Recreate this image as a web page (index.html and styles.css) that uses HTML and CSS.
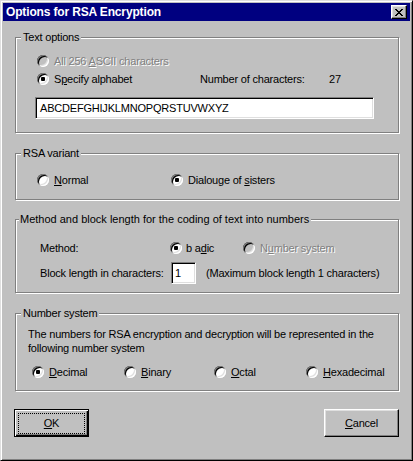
FILE: index.html
```html
<!DOCTYPE html>
<html>
<head>
<meta charset="utf-8">
<title>Options for RSA Encryption</title>
<link rel="stylesheet" href="styles.css">
</head>
<body>
<div class="window">
  <div class="titlebar">
    <span class="title">Options for RSA Encryption</span>
    <span class="close"><svg width="8" height="7" viewBox="0 0 8 7" shape-rendering="crispEdges"><path d="M0 0h2l2 2.5 2-2.5h2l-3 3.5 3 3.5h-2l-2-2.5-2 2.5h-2l3-3.5z" fill="#000"/></svg></span>
  </div>
  <div class="content">
    <div class="group g1">
      <div class="legend">Text options</div>
      <div class="row r1">
        <span class="opt disabled"><span class="radio off"></span><span>All 256 <u>A</u>SCII characters</span></span>
      </div>
      <div class="row r2">
        <span class="opt w-spec"><span class="radio checked"></span><span>S<u>p</u>ecify alphabet</span></span>
        <span class="w-num">Number of characters:</span>
        <span>27</span>
      </div>
      <div class="field alpha">ABCDEFGHIJKLMNOPQRSTUVWXYZ</div>
    </div>

    <div class="group g2">
      <div class="legend">RSA variant</div>
      <div class="row">
        <span class="opt w-normal"><span class="radio"></span><span><u>N</u>ormal</span></span>
        <span class="opt"><span class="radio checked"></span><span>Dialouge of <u>s</u>isters</span></span>
      </div>
    </div>

    <div class="group g3">
      <div class="legend legend-tight">Method and block length for the coding of text into numbers</div>
      <div class="row m1">
        <span class="w-method">Method:</span>
        <span class="opt w-badic"><span class="radio checked"></span><span>b a<u>d</u>ic</span></span>
        <span class="opt disabled"><span class="radio off"></span><span>N<u>u</u>mber system</span></span>
      </div>
      <div class="row m2">
        <span class="w-block">Block length in characters:</span>
        <span class="field blen">1</span>
        <span class="maxlen">(Maximum block length 1 characters)</span>
      </div>
    </div>

    <div class="group g4">
      <div class="legend">Number system</div>
      <p class="desc">The numbers for RSA encryption and decryption will be represented in the<br>following number system</p>
      <div class="row ns">
        <span class="opt w-dec"><span class="radio checked"></span><span><u>D</u>ecimal</span></span>
        <span class="opt w-bin"><span class="radio"></span><span><u>B</u>inary</span></span>
        <span class="opt w-oct"><span class="radio"></span><span><u>O</u>ctal</span></span>
        <span class="opt"><span class="radio"></span><span><u>H</u>exadecimal</span></span>
      </div>
    </div>

    <div class="buttons">
      <div class="btn default"><span class="focus"><u>O</u>K</span></div>
      <div class="btn"><span class="label"><u>C</u>ancel</span></div>
    </div>
  </div>
</div>
</body>
</html>
```

FILE: styles.css
```css
html, body {
  margin: 0;
  padding: 0;
}

body {
  background: #c0c0c0;
  font-family: "Liberation Sans", Arial, sans-serif;
  font-size: 11px;
  letter-spacing: -0.2px;
  color: #000;
}

u {
  text-decoration: underline;
  text-underline-offset: 1px;
  text-decoration-thickness: 1px;
}

.window {
  width: 413px;
  height: 461px;
  box-sizing: border-box;
  border: 1px solid;
  border-color: #dfdfdf #000 #000 #dfdfdf;
  box-shadow: inset 1px 1px #fff, inset -1px -1px #808080;
  padding: 2px;
  background: #c0c0c0;
  display: flex;
  flex-direction: column;
}

.titlebar {
  height: 18px;
  flex-shrink: 0;
  background: #000080;
  color: #fff;
  display: flex;
  align-items: center;
  justify-content: space-between;
  padding: 0 3px 0 3px;
}

.title {
  font-weight: bold;
  font-size: 12px;
  letter-spacing: -0.15px;
  line-height: 14px;
}

.close {
  width: 16px;
  height: 14px;
  box-sizing: border-box;
  background: #c0c0c0;
  border: 1px solid;
  border-color: #fff #000 #000 #fff;
  box-shadow: inset -1px -1px #808080, inset 1px 1px #dfdfdf;
  display: flex;
  align-items: center;
  justify-content: center;
  padding-right: 1px;
}

.close svg {
  display: block;
}

.content {
  padding: 16px 11px 0 12px;
  display: flex;
  flex-direction: column;
}

.group {
  border: 1px solid #808080;
  box-shadow: inset 1px 1px #fff, 1px 1px #fff;
  box-sizing: border-box;
  display: flex;
  flex-direction: column;
  align-items: flex-start;
}

.legend {
  margin-top: -7px;
  margin-left: 5px;
  padding: 0 2px;
  line-height: 13px;
  background: #c0c0c0;
}

.legend-tight {
  margin-left: 3px;
  padding: 0 2px 0 1px;
  letter-spacing: 0;
}

.row {
  display: flex;
  align-items: center;
  height: 18px;
  line-height: 13px;
  white-space: nowrap;
}

.opt {
  display: flex;
  align-items: center;
  gap: 5px;
}

.radio {
  width: 12px;
  height: 12px;
  flex-shrink: 0;
  border-radius: 50%;
  background: #fff;
  box-shadow: inset 1px 1px 0 #808080, inset -1px -1px 0 #fff, inset 2px 2px 0 #000, inset -2px -2px 0 #dfdfdf;
  display: flex;
  align-items: center;
  justify-content: center;
}

.radio.off {
  background: #c0c0c0;
}

.radio.checked::after {
  content: "";
  width: 4px;
  height: 4px;
  border-radius: 1px;
  background: #000;
}

.disabled {
  color: #808080;
  text-shadow: 1px 1px 0 #fff;
}

.field {
  box-sizing: border-box;
  background: #fff;
  border: 1px solid;
  border-color: #808080 #fff #fff #808080;
  box-shadow: inset 1px 1px #000, inset -1px -1px #dfdfdf;
  display: flex;
  align-items: center;
  white-space: nowrap;
}

/* Text options */
.g1 {
  height: 96px;
}

.g1 .row {
  padding-left: 21px;
}

.g1 .r1 {
  margin-top: 8px;
}

.w-spec {
  width: 163px;
}

.w-num {
  width: 129px;
}

.alpha {
  margin-top: 9px;
  margin-left: 19px;
  width: 339px;
  height: 22px;
  padding-left: 4px;
}

/* RSA variant */
.g2 {
  margin-top: 20px;
  height: 47px;
}

.g2 .row {
  margin-top: 11px;
  padding-left: 21px;
}

.w-normal {
  width: 134px;
}

/* Method */
.g3 {
  margin-top: 19px;
  height: 74px;
}

.g3 .row {
  padding-left: 24px;
}

.m1 {
  margin-top: 13px;
}

.m2 {
  margin-top: 5px;
  height: 22px;
}

.w-method {
  width: 130px;
}

.w-badic {
  width: 73px;
  gap: 4px;
}

.w-block {
  width: 131px;
}

.blen {
  width: 25px;
  height: 22px;
  padding-left: 3px;
}

.maxlen {
  margin-left: 10px;
}

/* Number system */
.g4 {
  margin-top: 20px;
  height: 78px;
}

.desc {
  margin: 7px 0 0 12px;
  line-height: 14px;
  white-space: nowrap;
}

.ns {
  margin-top: 8px;
  padding-left: 16px;
}

.w-dec {
  width: 92px;
}

.w-bin {
  width: 90px;
}

.w-oct {
  width: 92px;
}

/* Buttons */
.buttons {
  margin-top: 18px;
  margin-left: -1px;
  display: flex;
  justify-content: space-between;
}

.btn {
  width: 75px;
  height: 28px;
  box-sizing: border-box;
  border: 1px solid;
  border-color: #fff #000 #000 #fff;
  box-shadow: inset -1px -1px #808080, inset 1px 1px #dfdfdf;
  display: flex;
  align-items: center;
  justify-content: center;
  line-height: 13px;
}

.btn.default {
  border-color: #000;
  box-shadow: inset 1px 1px #fff, inset -1px -1px #000, inset -2px -2px #808080;
  padding: 3px 3px 2px 3px;
  align-items: stretch;
}

.focus {
  flex: 1;
  border: 1px dotted #000;
  display: flex;
  align-items: center;
  justify-content: center;
}

.label {
  padding-top: 1px;
}
```
